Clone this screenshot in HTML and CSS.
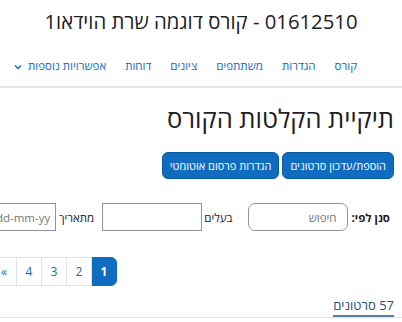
FILE: index.html
```html
<!DOCTYPE html>
<html lang="he" dir="rtl">
<head>
    <meta charset="UTF-8">
    <meta name="viewport" content="width=device-width, initial-scale=1.0">
    <title>תיקיית הקלטות הקורס</title>
    <link rel="stylesheet" href="styles.css">
</head>
<body>
    <div class="page-title">01612510 - קורס דוגמה שרת הוידאו1</div>
    <nav class="course-nav">
        <a href="#">קורס</a>
        <a href="#">הגדרות</a>
        <a href="#">משתתפים</a>
        <a href="#">ציונים</a>
        <a href="#">דוחות</a>
        <a href="#" class="more">אפשרויות נוספות
            <svg width="8" height="6" viewBox="0 0 8 6"><path d="M1 1.5 L4 4.5 L7 1.5" fill="none" stroke="#0f6cbf" stroke-width="1.4"/></svg>
        </a>
    </nav>
    <div class="container">
        <h1>תיקיית הקלטות הקורס</h1>
        <div class="actions">
            <button>הוספת/עדכון סרטונים</button>
            <button>הגדרות פרסום אוטומטי</button>
        </div>
        <div class="filters">
            <label class="strong">סנן לפי:</label>
            <input type="text" class="search" placeholder="חיפוש">
            <label class="owner">בעלים</label>
            <input type="text" class="plain">
            <label class="from">מתאריך</label>
            <input type="text" class="date" placeholder="dd-mm-yy" dir="ltr">
        </div>
        <ul class="pagination">
            <li class="active"><a href="#">1</a></li>
            <li><a href="#">2</a></li>
            <li><a href="#">3</a></li>
            <li><a href="#">4</a></li>
            <li><a href="#">»</a></li>
        </ul>
        <div class="tabs">
            <a href="#" class="tab-active">57 סרטונים</a>
        </div>
    </div>
</body>
</html>
```

FILE: styles.css
```css
body {
    font-family: 'Open Sans', 'DejaVu Sans', sans-serif;
    margin: 0;
    padding: 0;
    background-color: #fff;
    color: #1d2125;
    overflow-x: hidden;
}
.page-title {
    text-align: center;
    font-size: 20.3px;
    padding-top: 7px;
    height: 38px;
}
.course-nav {
    display: flex;
    gap: 19px;
    padding: 0 45px 0 0;
    height: 41px;
    align-items: center;
    border-bottom: 2px solid #e6e6e6;
    white-space: nowrap;
}
.course-nav a {
    color: #0f6cbf;
    text-decoration: none;
    font-size: 11.5px;
}
.course-nav .more svg {
    margin-right: 3px;
}
.container {
    padding: 0 8px;
}
h1 {
    font-size: 25.5px;
    font-weight: normal;
    margin: 12px 0 0;
    line-height: 36px;
}
.actions {
    display: flex;
    gap: 3px;
    margin-top: 16px;
}
.actions button {
    background-color: #0f6cbf;
    color: #fff;
    border: 1px solid #0a5aa0;
    border-radius: 6px;
    height: 27px;
    padding: 0 7px;
    font-size: 11px;
    font-family: 'Open Sans', 'DejaVu Sans', sans-serif;
}
.filters {
    display: flex;
    align-items: center;
    margin-top: 24px;
    white-space: nowrap;
    font-size: 11.5px;
}
.filters .strong {
    font-weight: bold;
    margin-left: 4px;
    margin-right: 4px;
}
.filters input {
    height: 28px;
    box-sizing: border-box;
    width: 100px;
    border: 1px solid #8f959e;
    font-size: 11.5px;
    padding: 0 10px;
    flex-shrink: 0;
    font-family: 'Open Sans', 'DejaVu Sans', sans-serif;
}
.filters .search {
    border-radius: 7px;
}
.filters .plain {
    border-radius: 0;
}
.filters .owner {
    margin-right: 15px;
    margin-left: 2px;
}
.filters .from {
    margin-right: 8px;
    margin-left: 3px;
}
.filters .date {
    width: 62px;
    padding: 0 4px 0 1px;
    border-radius: 0;
}
.pagination {
    list-style: none;
    display: flex;
    padding: 0;
    margin: 26px 277px 0 0;
}
.pagination li a {
    display: flex;
    align-items: center;
    justify-content: center;
    width: 24px;
    height: 27px;
    border: 1px solid #dee2e6;
    margin-left: -1px;
    color: #0f6cbf;
    text-decoration: none;
    font-size: 12px;
}
.pagination li.active a {
    background-color: #0f6cbf;
    border-color: #0f6cbf;
    color: #fff;
    font-weight: bold;
    border-radius: 0 6px 6px 0;
}
.tabs {
    margin-top: 11px;
    border-bottom: 1px solid #dee2e6;
    margin-left: -8px;
    margin-right: -8px;
    padding-right: 8px;
    display: flex;
}
.tabs a {
    color: #1d4f7c;
    text-decoration: none;
    font-size: 13px;
    line-height: 16px;
    padding-bottom: 2px;
    border-bottom: 2px solid #5b7d9e;
}
```
